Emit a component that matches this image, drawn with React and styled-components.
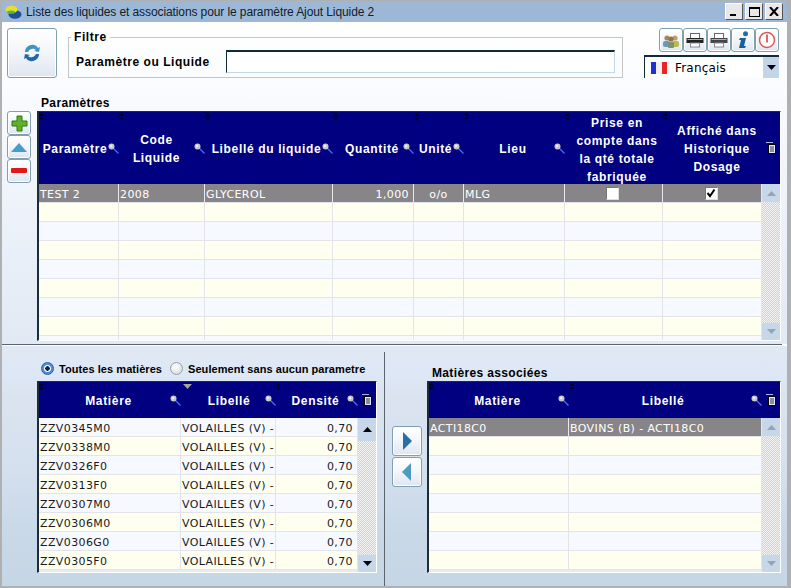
import React from 'react';
import styled, { createGlobalStyle } from 'styled-components';

const Global = createGlobalStyle`
  html, body { margin: 0; padding: 0; background: #fff; }
  * { box-sizing: border-box; }
`;
const FONT = '"DejaVu Sans", "Liberation Sans", sans-serif';
const BOLD = '"Liberation Sans", Arial, sans-serif';

const Window = styled.div`
  width: 791px; height: 588px; display: flex; flex-direction: column;
  border-style: solid; border-color: #aeb0b2; border-width: 1px 4px 2px 2px;
  font-family: ${FONT}; color: #000; overflow: hidden;
`;
const TitleBar = styled.div`
  height: 21px; flex: none; background: #9db8d6; display: flex; align-items: center;
  padding: 0 4px 0 3px;
`;
const TitleText = styled.div`
  font: 12px "Liberation Sans", sans-serif; color: #10202c; margin-left: 4px; flex: 1; letter-spacing: -0.1px; white-space: nowrap;
`;
const WinBtn = styled.div`
  width: 18px; height: 17px; margin-left: 2px; background: #e8e8e8;
  border: 1px solid; border-color: #fff #555 #555 #fff;
  display: flex; align-items: center; justify-content: center;
`;
const Top = styled.div`
  height: 322px; flex: none; padding: 6px 0 0 5px;
  background: linear-gradient(#ffffff 0, #f9fbfe 70px, #eef3fa 180px, #e1e9f4 322px);
`;
const TopRow = styled.div`display: flex; height: 50px;`;
const Bevel = styled.button`
  width: ${p => p.$w || 24}px; height: ${p => p.$h || 24}px; flex: none; padding: 0;
  border: 1px solid #80a0b0; border-radius: 3px;
  background: linear-gradient(#ffffff, #f4f6fa 45%, #dfe6f1);
  box-shadow: inset 0 0 0 1px #ffffff;
  display: flex; align-items: center; justify-content: center;
`;
const Filter = styled.fieldset`
  width: 555px; height: 47px; margin: 3px 0 0 11px; padding: 0 7px;
  border: 1px solid #c3c6c8; min-width: 0;
`;
const Legend = styled.legend`
  font: bold 12px/13px ${BOLD}; letter-spacing: 0.55px; padding: 0 3px; margin-left: -5px;
`;
const FilterRow = styled.div`display: flex; align-items: center; margin-top: 6px;`;
const FilterLabel = styled.label`
  width: 150px; flex: none; font: bold 12px ${BOLD}; letter-spacing: 0.55px; white-space: nowrap;
`;
const FilterInput = styled.input`
  width: 389px; height: 23px; background: #fff; outline: none;
  border-style: solid; border-width: 2px 1px 1px 1px; border-color: #0f2a3a #c3d8ea #c3d8ea #0f2a3a;
`;
const Tools = styled.div`
  width: 135px; margin-left: 21px; display: flex; flex-direction: column; gap: 3px;
`;
const ToolRow = styled.div`display: flex; justify-content: flex-end; padding-left: 16px;`;
const Select = styled.div`
  height: 23px; display: flex; align-items: center; background: #fff;
  border-style: solid; border-width: 2px 0 0 1px; border-color: #0f2a3a;
  font: 12px ${FONT}; letter-spacing: 0.2px; padding-left: 6px;
`;
const SelectText = styled.span`margin-left: 8px; flex: 1;`;
const SelectArrow = styled.div`
  width: 16px; height: 100%; background: #c3d6e8; display: flex; align-items: center; justify-content: center;
`;
const SectionLabel = styled.div`
  font: bold 12px/15px ${BOLD}; letter-spacing: 0.35px; padding-left: ${p => p.$pl || 0}px;
  margin-top: ${p => p.$mt || 0}px; height: 15px;
`;
const ParamsRow = styled.div`display: flex; gap: 6px;`;
const SideButtons = styled.div`width: 24px; display: flex; flex-direction: column;`;
const Divider = styled.div`
  height: 2px; flex: none; width: 780px; background: #5b646c; border-bottom: 1px solid #fff;
`;
const Bottom = styled.div`
  flex: 1; display: flex; padding-top: 6px; min-height: 0;
  background: linear-gradient(#e1e8f2 0, #dde7f6 28px, #dbe3ef 50px, #d6e1ef 110px, #c8d8e7 190px, #c5d6e6 240px);
`;
const LeftPane = styled.div`width: 382px; flex: none; padding-left: 35px;`;
const RadioRow = styled.div`
  height: 15px; margin: 9px 0 5px; display: flex; align-items: center; padding-left: 4px;
  font: bold 11px ${BOLD}; letter-spacing: 0.06px; white-space: nowrap;
`;
const Radio = styled.span`
  width: 13px; height: 13px; border-radius: 50%; flex: none; margin-right: 5px;
  border: 1px solid ${p => p.$on ? '#2e5f96' : '#9aa0a6'};
  background: ${p => p.$on ? 'radial-gradient(circle, #10204a 0 2px, #fff 2.5px 3px, #4f8fd4 4px)' : 'radial-gradient(circle at 40% 35%, #fff, #cfd4da)'};
`;
const RadioLabel = styled.span`margin-right: 8px;`;
const RightPane = styled.div`
  flex: 1; display: flex; padding-left: 7px;
  border-left: 1px solid #5b646c;
`;
const Arrows = styled.div`
  width: 30px; flex: none; margin-right: 5px; padding-top: 74px; display: flex; flex-direction: column; gap: 1px;
`;
const GridColumn = styled.div`display: flex; flex-direction: column;`;

const GridBox = styled.div`
  width: ${p => p.$w}px; height: ${p => p.$h}px; display: flex; flex-direction: column;
  border-style: solid; border-width: 1px 1px 1px 2px; border-color: #1d2c3a #fff #fff #1d2c3a;
  background: #e8eaf0;
`;
const GridHead = styled.div`
  height: ${p => p.$h}px; flex: none; background: #000080; display: flex; color: #fff;
`;
const HeadCell = styled.div`
  width: ${p => p.$w}px; flex: none; display: flex; align-items: center; position: relative;
`;
const HeadLabel = styled.div`
  flex: 1; text-align: center; font: bold 12px/18px ${BOLD}; letter-spacing: 0.65px;
  white-space: pre-line; padding: ${p => p.$down || 2}px 0 0 ${p => p.$shift || 0}px;
`;
const Handle = styled.svg`position: absolute; left: 0; top: 1px;`;
const SortMark = styled.svg`position: absolute; left: 2px; top: 2px;`;
const HeadEnd = styled.div`flex: 1; display: flex; align-items: center; justify-content: center;`;
const GridBodyWrap = styled.div`flex: 1; display: flex; min-height: 0;`;
const Rows = styled.div`overflow: hidden; flex: none; width: ${p => p.$w}px;`;
const Row = styled.div`
  display: flex; height: 19px; flex: none; border-bottom: 1px solid #e2e4ea;
  background: ${p => p.$sel ? '#888588' : p.$alt ? '#fffff0' : '#f6f9ff'};
  color: ${p => p.$sel ? '#fff' : '#1a1a1a'};
`;
const Cell = styled.div`
  width: ${p => p.$w}px; flex: none; font: 11px/21px ${FONT}; letter-spacing: 0.035em;
  padding: 0 ${p => p.$right ? 4 : 1}px 0 1px; white-space: nowrap; overflow: hidden;
  text-align: ${p => p.$align || 'left'};
  border-right: 1px solid ${p => p.$sel ? '#e8e8e8' : '#e2e4ea'};
  display: ${p => p.$check ? 'flex' : 'block'}; align-items: center; justify-content: center;
`;
const CheckBox = styled.span`
  width: 13px; height: 13px; margin-right: 2px; background: #fff; border: 1px solid; border-color: #777 #ddd #ddd #777;
  display: flex; align-items: center; justify-content: center;
`;
const Scrollbar = styled.div`
  flex: 1; display: flex; flex-direction: column;
  background: repeating-conic-gradient(#d0d0d0 0 25%, #f4f4f4 0 50%) 0 0 / 2px 2px;
`;
const ScrollBtn = styled.div`
  height: ${p => p.$h || 17}px; flex: none; background: #c5d7e8; display: flex; align-items: center; justify-content: center;
`;
const ScrollTrack = styled.div`flex: 1;`;

const Magnifier = () => (
  <svg width="11" height="11" viewBox="0 0 11 11" style={{ flex: 'none' }}>
    <line x1="5" y1="5" x2="10.5" y2="10.5" stroke="#4a6cff" strokeWidth="1.2" />
    <circle cx="3.5" cy="3.5" r="3" fill="#c8c8c8" />
    <circle cx="3" cy="3" r="1.2" fill="#eee" />
  </svg>
);
const MenuIcon = () => (
  <svg width="10" height="12" viewBox="0 0 10 12">
    <path d="M0 .5h7" stroke="#9fb4ff" strokeWidth="1" />
    <rect x="2.5" y="2.5" width="7" height="9" fill="#dfe6ff" stroke="#000" />
    <path d="M4 5h4M4 7h4M4 9h4" stroke="#334" />
  </svg>
);
const ResizeHandle = () => (
  <Handle width="5" height="7" viewBox="0 0 5 7"><path d="M0 3 2.5 0 5 3zM0 4l2.5 3L5 4z" fill="#000" /></Handle>
);
const Tri = ({ dir = 'up', color = '#000' }) => (
  <svg width="9" height="5" viewBox="0 0 9 5">
    <path d={dir === 'up' ? 'M0 5 4.5 0 9 5z' : 'M0 0h9L4.5 5z'} fill={color} />
  </svg>
);
const Tick = () => (
  <svg width="10" height="10" viewBox="0 0 10 10"><path d="M1.5 5 4 8 8.5 1.5" fill="none" stroke="#000" strokeWidth="2" /></svg>
);

const DataGrid = ({ w, h, headH, cols, rows, scrollTop, active, sorted }) => {
  const rowsW = cols.reduce((s, c) => s + c.w, 0);
  return (
    <GridBox $w={w} $h={h}>
      <GridHead $h={headH}>
        {cols.map((c, i) => (
          <HeadCell key={i} $w={c.w}>
            {sorted === i
              ? <SortMark width="9" height="5" viewBox="0 0 9 5"><path d="M0 0h9L4.5 5z" fill="#a8a890" /></SortMark>
              : <ResizeHandle />}
            <HeadLabel $shift={c.shift} $down={c.down}>{c.t}</HeadLabel>
            {c.mag !== false && <Magnifier />}
          </HeadCell>
        ))}
        <HeadEnd><MenuIcon /></HeadEnd>
      </GridHead>
      <GridBodyWrap>
        <Rows $w={rowsW}>
          {rows.map((r, i) => (
            <Row key={i} $sel={r.sel} $alt={i % 2 === 1}>
              {cols.map((c, j) => (
                <Cell key={j} $w={c.w} $right={c.align === 'right'} $align={c.align} $sel={r.sel} $check={c.check}>
                  {c.check
                    ? (r.sel ? <CheckBox>{r.cells[j] && <Tick />}</CheckBox> : null)
                    : r.cells && r.cells[j]}
                </Cell>
              ))}
            </Row>
          ))}
        </Rows>
        <Scrollbar>
          <ScrollBtn $h={scrollTop}><Tri dir="up" color={active ? '#000' : '#97a3ae'} /></ScrollBtn>
          <ScrollTrack />
          <ScrollBtn $h={17}><Tri dir="down" color={active ? '#000' : '#97a3ae'} /></ScrollBtn>
        </Scrollbar>
      </GridBodyWrap>
    </GridBox>
  );
};

const paramCols = [
  { w: 80, t: 'Paramètre', shift: 3 },
  { w: 86, t: 'Code\nLiquide' },
  { w: 128, t: 'Libellé du liquide', shift: 6 },
  { w: 81, t: 'Quantité', align: 'right', shift: 8 },
  { w: 50, t: 'Unité', align: 'center', shift: 4 },
  { w: 101, t: 'Lieu', shift: 8 },
  { w: 98, t: 'Prise en\ncompte dans\nla qté totale\nfabriquée', mag: false, check: true, shift: 6, down: 4 },
  { w: 99, t: 'Affiché dans\nHistorique\nDosage', mag: false, check: true, shift: 9 },
];
const paramRows = [
  { sel: true, cells: ['TEST 2', '2008', 'GLYCEROL', '1,000', 'o/o', 'MLG', false, true] },
  ...Array.from({ length: 8 }, () => ({})),
];
const matCols = [
  { w: 142, t: 'Matière', shift: 8 },
  { w: 95, t: 'Libellé', shift: 12 },
  { w: 82, t: 'Densité', align: 'right', shift: 8 },
];
const mats = ['ZZV0345M0', 'ZZV0338M0', 'ZZV0326F0', 'ZZV0313F0', 'ZZV0307M0', 'ZZV0306M0', 'ZZV0306G0', 'ZZV0305F0'];
const assocCols = [
  { w: 140, t: 'Matière', shift: 8 },
  { w: 193, t: 'Libellé', shift: 6 },
];
const assocRows = [
  { sel: true, cells: ['ACTI18C0', 'BOVINS (B) - ACTI18C0'] },
  ...Array.from({ length: 7 }, () => ({})),
];

const Printer = ({ tone = '#222' }) => (
  <svg width="18" height="16" viewBox="0 0 18 16">
    <rect x="4.5" y="1.5" width="9" height="5" fill="#fff" stroke="#667" />
    <rect x="0.5" y="6" width="17" height="5" fill={tone} />
    <rect x="1.5" y="7" width="15" height="1" fill="#aab" />
    <rect x="4.5" y="11" width="9" height="4" fill="#fff" stroke="#889" />
  </svg>
);

export default function App() {
  return (
    <Window>
      <Global />
      <TitleBar>
        <svg width="17" height="14" viewBox="0 0 17 14">
          <ellipse cx="10" cy="9.5" rx="6.5" ry="4.2" fill="#1f4e9a" />
          <ellipse cx="6.5" cy="4.5" rx="6" ry="3.8" fill="#e4e02a" />
          <ellipse cx="6" cy="7.2" rx="4" ry="1.6" fill="#5cb04a" />
        </svg>
        <TitleText>Liste des liquides et associations pour le paramètre Ajout Liquide 2</TitleText>
        <WinBtn><svg width="10" height="10" viewBox="0 0 10 10"><rect x="1" y="7" width="6" height="2" fill="#000" /></svg></WinBtn>
        <WinBtn><svg width="11" height="10" viewBox="0 0 11 10"><rect x=".5" y=".5" width="10" height="9" fill="none" stroke="#000" /><rect x="0" y="0" width="11" height="2" fill="#000" /></svg></WinBtn>
        <WinBtn><svg width="10" height="9" viewBox="0 0 10 9"><path d="M1 0 9 9M9 0 1 9" stroke="#000" strokeWidth="2" /></svg></WinBtn>
      </TitleBar>
      <Top>
        <TopRow>
          <Bevel $w={50} $h={50}>
            <svg width="16" height="18" viewBox="0 0 16 18">
              <path d="M1 8C1 3 6 0 10 1c2 .4 3 1.5 4 3l2-1-1 5-5-1 2-1C10 4 6 4 4 8z" fill="#3f93bd" />
              <path d="M15 10c0 5-5 8-9 7-2-.4-3-1.500-4-3l-2 1 1-5 5 1-2 1c2 2 6 2 8-2z" fill="#2368a6" />
            </svg>
          </Bevel>
          <Filter>
            <Legend>Filtre</Legend>
            <FilterRow>
              <FilterLabel>Paramètre ou Liquide</FilterLabel>
              <FilterInput />
            </FilterRow>
          </Filter>
          <Tools>
            <ToolRow>
              <Bevel>
                <svg width="18" height="15" viewBox="0 0 18 15">
                  <circle cx="5" cy="5" r="2.6" fill="#a08868" /><rect x="1" y="8" width="7" height="6" rx="2" fill="#6a98c0" />
                  <circle cx="13" cy="5" r="2.6" fill="#c0a060" /><rect x="10" y="8" width="7" height="6" rx="2" fill="#b8bc50" />
                  <circle cx="9" cy="6" r="2.6" fill="#907048" /><rect x="6" y="9" width="6" height="6" rx="1" fill="#809070" />
                </svg>
              </Bevel>
              <Bevel><Printer /></Bevel>
              <Bevel><Printer tone="#444" /></Bevel>
              <Bevel>
                <svg width="14" height="18" viewBox="0 0 14 18">
                  <circle cx="9.500" cy="2.800" r="2.500" fill="#1c6fae" />
                  <path d="M4 7h6L8 15h2l-1 2H3l2-8H3z" fill="#17609c" />
                </svg>
              </Bevel>
              <Bevel>
                <svg width="18" height="18" viewBox="0 0 18 18">
                  <circle cx="9" cy="9" r="7.500" fill="#fff" stroke="#d85a5a" strokeWidth="1.500" />
                  <rect x="8" y="3.500" width="2" height="8" fill="#d86a6a" />
                </svg>
              </Bevel>
            </ToolRow>
            <Select>
              <svg width="16" height="12" viewBox="0 0 16 12">
                <rect width="5" height="12" fill="#2233cc" /><rect x="5" width="6" height="12" fill="#f0f0f0" /><rect x="11" width="5" height="12" fill="#ee2222" />
              </svg>
              <SelectText>Français</SelectText>
              <SelectArrow><Tri dir="down" /></SelectArrow>
            </Select>
          </Tools>
        </TopRow>
        <SectionLabel $mt={18} $pl={34}>Paramètres</SectionLabel>
        <ParamsRow>
          <SideButtons>
            <Bevel>
              <svg width="17" height="17" viewBox="0 0 17 17">
                <path d="M6 1h5v5h5v5h-5v5H6v-5H1V6h5z" fill="#62b02a" stroke="#2f7a12" />
              </svg>
            </Bevel>
            <Bevel>
              <svg width="16" height="9" viewBox="0 0 16 9"><path d="M0 9 8 0l8 9z" fill="#4a9cc8" /></svg>
            </Bevel>
            <Bevel>
              <svg width="16" height="6" viewBox="0 0 16 6"><rect width="16" height="5" rx="1" fill="#e01818" /></svg>
            </Bevel>
          </SideButtons>
          <DataGrid w={744} h={230} headH={72} cols={paramCols} rows={paramRows} scrollTop={18} />
        </ParamsRow>
      </Top>
      <Divider />
      <Bottom>
        <LeftPane>
          <RadioRow>
            <Radio $on /><RadioLabel>Toutes les matières</RadioLabel>
            <Radio /><RadioLabel>Seulement sans aucun parametre</RadioLabel>
          </RadioRow>
          <DataGrid
            w={340} h={192} headH={36} cols={matCols} active sorted={1}
            rows={mats.map(m => ({ cells: [m, 'VOLAILLES (V) - ', '0,70'] }))}
            scrollTop={23}
          />
        </LeftPane>
        <RightPane>
          <Arrows>
            <Bevel $w={30} $h={30}>
              <svg width="10" height="18" viewBox="0 0 10 18"><path d="M1 0l9 9-9 9z" fill="#2a6ea8" /></svg>
            </Bevel>
            <Bevel $w={30} $h={30}>
              <svg width="10" height="18" viewBox="0 0 10 18"><path d="M9 0l-9 9 9 9z" fill="#4a9cc0" /></svg>
            </Bevel>
          </Arrows>
          <GridColumn>
            <SectionLabel $mt={14} $pl={5}>Matières associées</SectionLabel>
            <DataGrid w={354} h={192} headH={36} cols={assocCols} rows={assocRows} scrollTop={18} />
          </GridColumn>
        </RightPane>
      </Bottom>
    </Window>
  );
}
